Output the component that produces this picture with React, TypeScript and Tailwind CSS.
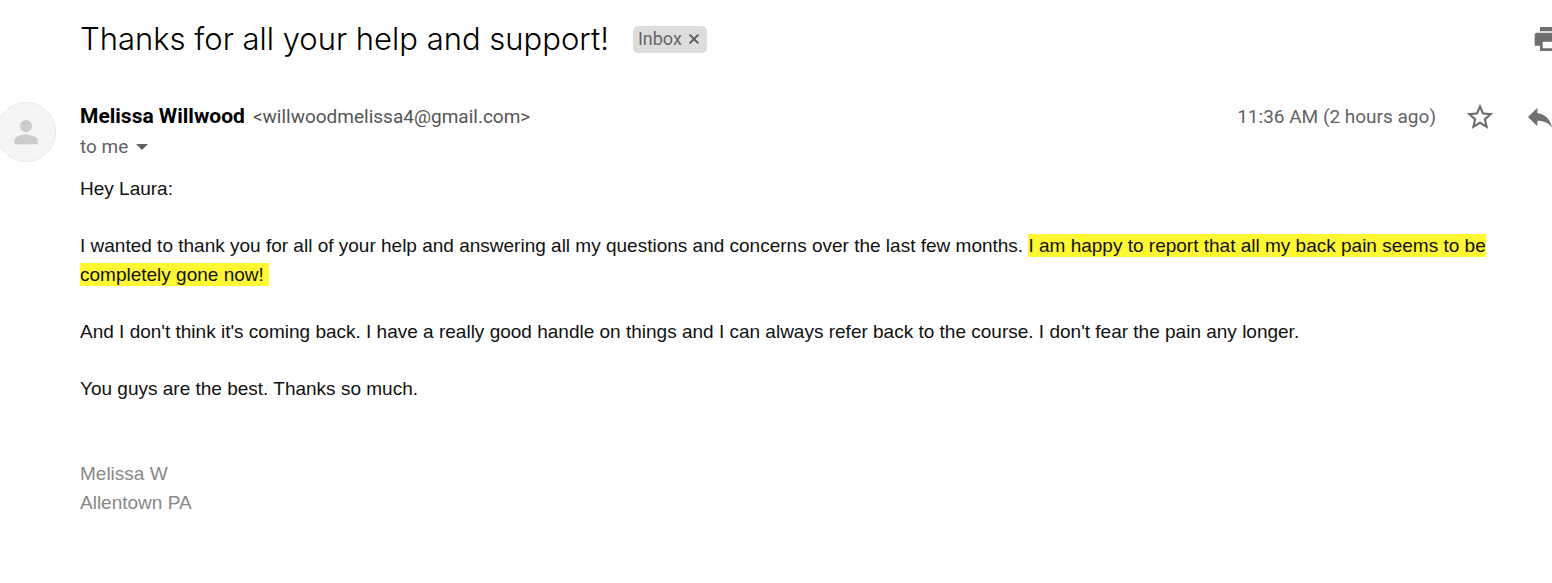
import type { ReactNode } from "react";

type IconProps = { path: string; className: string };

function Icon({ path, className }: IconProps) {
  return (
    <svg viewBox="0 0 24 24" fill="currentColor" aria-hidden="true" className={className}>
      <path d={path} />
    </svg>
  );
}

const PRINT = "M6 3h12v3.2H6zM3 7.4h18L22 8.4V17h-4v4H6v-4H2V8.4zM8 14v5h8v-5z";
const STAR =
  "M22 9.24l-7.19-.62L12 2 9.19 8.63 2 9.24l5.46 4.73L5.82 21 12 17.27 18.18 21l-1.63-7.03L22 9.24zM12 15.4l-3.76 2.27 1-4.28-3.32-2.88 4.38-.38L12 6.1l1.71 4.04 4.38.38-3.32 2.88 1 4.28L12 15.4z";
const REPLY = "M10 9V5l-7 7 7 7v-4.1c5 0 8.5 1.6 11 5.1-1-5-4-10-11-11z";
const PERSON =
  "M12 12c2.21 0 4-1.79 4-4s-1.79-4-4-4-4 1.79-4 4 1.79 4 4 4zm0 1.7c-2.67 0-7.8 1.34-7.8 4v2.5h15.6v-2.5c0-2.66-5.13-4-7.8-4z";
const CLOSE =
  "M19 6.41 17.59 5 12 10.59 6.41 5 5 6.41 10.59 12 5 17.59 6.41 19 12 13.41 17.59 19 19 17.59 13.41 12z";

function IconButton({ label, path }: { label: string; path: string }) {
  return (
    <button type="button" aria-label={label} className="shrink-0 text-[#6f6f6f]">
      <Icon path={path} className="size-8" />
    </button>
  );
}

function Highlight({ children }: { children: ReactNode }) {
  return <mark className="bg-[#fff833] py-px text-[#111111]">{children}</mark>;
}

export default function App() {
  return (
    <main className="min-h-screen overflow-x-hidden bg-white pt-4 font-['Roboto',sans-serif]">
      <header className="-mr-3 flex items-center pl-20">
        <h1 className="font-['Inter',sans-serif] text-[31px] leading-[46px] font-light text-black">
          Thanks for all your help and support!
        </h1>
        <div className="ml-6 flex h-[27px] items-center gap-1 rounded-[5px] bg-[#dddddd] px-[5px] text-lg text-[#666666]">
          <span>Inbox</span>
          <button type="button" aria-label="Remove Inbox label">
            <Icon path={CLOSE} className="size-4 stroke-current stroke-[1.5]" />
          </button>
        </div>
        <div className="ml-auto flex">
          <IconButton label="Print" path={PRINT} />
        </div>
      </header>

      <article className="mt-10 flex">
        <div className="-ml-1 flex size-[60px] shrink-0 items-center justify-center rounded-full border border-[#e8e8e8] bg-[#f5f5f5] text-[#cccccc]">
          <Icon path={PERSON} className="size-9" />
        </div>
        <div className="min-w-0 flex-1 pl-6">
          <div className="-mr-1 flex h-[30px] items-center">
            <h2 className="text-[21px] font-bold text-black">Melissa Willwood</h2>
            <span className="ml-2 text-[19px] text-[#555555]">&lt;willwoodmelissa4@gmail.com&gt;</span>
            <time className="ml-auto text-[19px] text-[#5f6368]">11:36 AM (2 hours ago)</time>
            <div className="ml-7 flex gap-7">
              <IconButton label="Star" path={STAR} />
              <IconButton label="Reply" path={REPLY} />
            </div>
          </div>
          <button type="button" className="flex h-[30px] items-center gap-2 text-[19px] text-[#5f6368]">
            to me
            <svg viewBox="0 0 12 6" fill="currentColor" aria-hidden="true" className="h-[6px] w-3">
              <path d="M0 0h12L6 6z" />
            </svg>
          </button>

          <div className="mt-3 flex flex-col gap-7 pr-6 font-['Liberation_Sans',Arial,sans-serif] text-[19px] leading-[29px] text-[#111111]">
            <p>Hey Laura:</p>
            <p>
              I wanted to thank you for all of your help and answering all my questions and concerns over the last few
              months. <Highlight>I am happy to report that all my back pain seems to be completely gone now!&nbsp;</Highlight>
            </p>
            <p>
              And I don't think it's coming back. I have a really good handle on things and I can always refer back to
              the course. I don't fear the pain any longer.
            </p>
            <p>You guys are the best. Thanks so much.</p>
            <p className="mt-7 text-[#888888]">
              Melissa W
              <br />
              Allentown PA
            </p>
          </div>
        </div>
      </article>
    </main>
  );
}
